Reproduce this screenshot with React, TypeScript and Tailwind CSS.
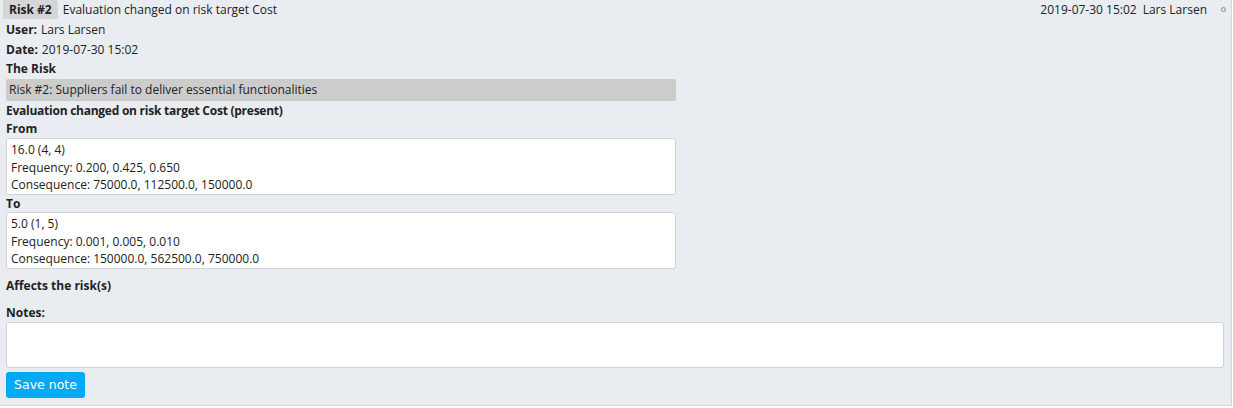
import React from "react";

export default function App() {
  const font = { fontFamily: '"Open Sans", "Liberation Sans", sans-serif' };
  return (
    <div
      className="w-[1232px] h-[406px] bg-[#e9ecf0] border-r border-b border-[#d3d6da] text-[12px] text-[#222] box-border"
      style={font}
    >
      <div className="flex items-center justify-between h-[19px]">
        <div className="flex items-center h-full">
          <span className="ml-[3px] h-[19px] px-[6px] bg-[#d4d5d7] rounded-[2px] font-bold flex items-center">
            Risk #2
          </span>
          <span className="ml-[5px]">Evaluation changed on risk target Cost</span>
        </div>
        <div className="flex items-center h-full">
          <span>2019-07-30 15:02</span>
          <span className="ml-[6px]">Lars Larsen</span>
          <span className="ml-[14px] mr-[5px] w-[5px] h-[5px] rounded-full border border-[#888]" />
        </div>
      </div>
      <div className="px-[6px]">
        <div className="h-[21px] flex items-center">
          <span className="font-bold">User:</span>
          <span className="ml-[4px]">Lars Larsen</span>
        </div>
        <div className="h-[19px] flex items-center">
          <span className="font-bold">Date:</span>
          <span className="ml-[4px]">2019-07-30 15:02</span>
        </div>
        <div className="h-[20px] flex items-center font-bold">The Risk</div>
        <div className="w-[670px] h-[22px] bg-[#cccccc] rounded-[2px] px-[3px] flex items-center">
          Risk #2: Suppliers fail to deliver essential functionalities
        </div>
        <div className="h-[19px] flex items-center font-bold tracking-[-0.25px]">
          Evaluation changed on risk target Cost (present)
        </div>
        <div className="h-[18px] flex items-center font-bold">From</div>
        <div className="w-[670px] h-[57px] bg-white border border-[#d0d3d6] rounded-[3px] px-[4px] pt-[2px] leading-[17.5px]">
          <div>16.0 (4, 4)</div>
          <div>Frequency: 0.200, 0.425, 0.650</div>
          <div>Consequence: 75000.0, 112500.0, 150000.0</div>
        </div>
        <div className="h-[17px] flex items-center font-bold">To</div>
        <div className="w-[670px] h-[57px] bg-white border border-[#d0d3d6] rounded-[3px] px-[4px] pt-[2px] leading-[17.5px]">
          <div>5.0 (1, 5)</div>
          <div>Frequency: 0.001, 0.005, 0.010</div>
          <div>Consequence: 150000.0, 562500.0, 750000.0</div>
        </div>
        <div className="h-[34px] flex items-center font-bold">Affects the risk(s)</div>
        <div className="h-[19px] flex items-center font-bold">Notes:</div>
        <div className="w-[1218px] h-[46px] bg-white border border-[#d0d3d6] rounded-[3px]" />
        <button
          className="mt-[4px] w-[79px] h-[26px] bg-[#03a9f4] text-white rounded-[3px] text-[12.5px] flex items-center justify-center"
          style={{ fontFamily: '"DejaVu Sans", Verdana, sans-serif' }}
        >
          Save note
        </button>
      </div>
    </div>
  );
}
